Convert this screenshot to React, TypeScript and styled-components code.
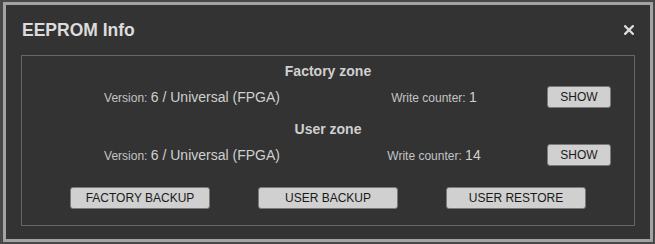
import React from "react";
import styled, { createGlobalStyle } from "styled-components";

const GlobalStyle = createGlobalStyle`
  body {
    margin: 0;
    background: #484848;
    font-family: "Liberation Sans", Arial, sans-serif;
  }
`;

const Dialog = styled.div`
  box-sizing: border-box;
  width: 650px;
  height: 240px;
  margin: 2px 0 0 3px;
  border: 3px solid #a3a3a3;
  background: #333333;
  display: flex;
  flex-direction: column;
`;

const Header = styled.div`
  display: flex;
  justify-content: space-between;
  align-items: center;
  padding: 15px 16px 0 16px;
  height: 20px;
`;

const Title = styled.div`
  font-size: 17.5px;
  line-height: 20px;
  font-weight: bold;
  color: #dcdcdc;
`;

const CloseButton = styled.button`
  border: none;
  background: none;
  padding: 0;
  width: 10px;
  height: 10px;
  display: flex;
  cursor: pointer;
`;

const Box = styled.div`
  margin: 15px 15px 0 15px;
  height: 171px;
  box-sizing: border-box;
  border: 1px solid #666666;
  padding: 7px 0 0 0;
  display: flex;
  flex-direction: column;
`;

const Zone = styled.div<{ $first?: boolean }>`
  display: flex;
  flex-direction: column;
  margin-top: ${({ $first }) => ($first ? "0" : "13px")};
`;

const ZoneTitle = styled.div`
  text-align: center;
  font-size: 14px;
  line-height: 16px;
  font-weight: bold;
  color: #d0d0d0;
  margin-bottom: 7px;
`;

const InfoRow = styled.div`
  display: grid;
  grid-template-columns: 304px 180px 110px;
  padding-left: 18px;
  height: 22px;
  align-items: center;
`;

const Cell = styled.div`
  text-align: center;
  line-height: 16px;
  white-space: nowrap;
`;

const Label = styled.span`
  font-size: 12px;
  color: #c4c4c4;
`;

const Value = styled.span`
  font-size: 14px;
  color: #d0d0d0;
`;

const Button = styled.button<{ $wide?: boolean }>`
  box-sizing: border-box;
  height: 22px;
  width: ${({ $wide }) => ($wide ? "140px" : "64px")};
  padding: 0;
  border: 1px solid #7a7a7a;
  border-radius: 3px;
  background: #d0d0d0;
  color: #1a1a1a;
  font-family: "Liberation Sans", Arial, sans-serif;
  font-size: 12px;
  cursor: pointer;
`;

const ActionRow = styled.div`
  display: flex;
  justify-content: center;
  gap: 48px;
  margin-top: 21px;
`;

const zones = [
  { name: "Factory zone", version: "6 / Universal (FPGA)", counter: "1" },
  { name: "User zone", version: "6 / Universal (FPGA)", counter: "14" },
];

const App: React.FunctionComponent = () => {
  return (
    <>
      <GlobalStyle />
      <Dialog>
        <Header>
          <Title>EEPROM Info</Title>
          <CloseButton aria-label="Close">
            <svg width="10" height="10" viewBox="0 0 10 10">
              <path
                d="M1.2 1.2 L8.8 8.8 M8.8 1.2 L1.2 8.8"
                stroke="#dcdcdc"
                strokeWidth="2.3"
                strokeLinecap="square"
              />
            </svg>
          </CloseButton>
        </Header>
        <Box>
          {zones.map((z, i) => (
            <Zone key={z.name} $first={i === 0}>
              <ZoneTitle>{z.name}</ZoneTitle>
              <InfoRow>
                <Cell>
                  <Label>Version: </Label>
                  <Value>{z.version}</Value>
                </Cell>
                <Cell>
                  <Label>Write counter: </Label>
                  <Value>{z.counter}</Value>
                </Cell>
                <Cell>
                  <Button>SHOW</Button>
                </Cell>
              </InfoRow>
            </Zone>
          ))}
          <ActionRow>
            <Button $wide>FACTORY BACKUP</Button>
            <Button $wide>USER BACKUP</Button>
            <Button $wide>USER RESTORE</Button>
          </ActionRow>
        </Box>
      </Dialog>
    </>
  );
};

export default App;
